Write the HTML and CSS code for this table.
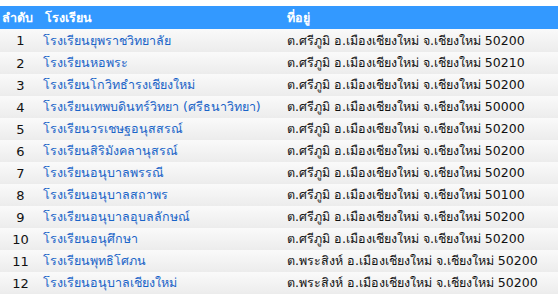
FILE: index.html
```html
<!DOCTYPE html>
<html lang="th">
<head>
<meta charset="utf-8">
<link rel="stylesheet" href="styles.css">
</head>
<body>
<table class="schools">
  <thead>
    <tr><th class="c-no">ลำดับ</th><th class="c-name">โรงเรียน</th><th class="c-addr">ที่อยู่</th></tr>
  </thead>
  <tbody>
    <tr><td class="c-no">1</td><td class="c-name"><a href="#">โรงเรียนยุพราชวิทยาลัย</a></td><td class="c-addr">ต.ศรีภูมิ อ.เมืองเชียงใหม่ จ.เชียงใหม่ 50200</td></tr>
    <tr><td class="c-no">2</td><td class="c-name"><a href="#">โรงเรียนหอพระ</a></td><td class="c-addr">ต.ศรีภูมิ อ.เมืองเชียงใหม่ จ.เชียงใหม่ 50210</td></tr>
    <tr><td class="c-no">3</td><td class="c-name"><a href="#">โรงเรียนโกวิทธำรงเชียงใหม่</a></td><td class="c-addr">ต.ศรีภูมิ อ.เมืองเชียงใหม่ จ.เชียงใหม่ 50200</td></tr>
    <tr><td class="c-no">4</td><td class="c-name"><a href="#">โรงเรียนเทพบดินทร์วิทยา (ศรีธนาวิทยา)</a></td><td class="c-addr">ต.ศรีภูมิ อ.เมืองเชียงใหม่ จ.เชียงใหม่ 50000</td></tr>
    <tr><td class="c-no">5</td><td class="c-name"><a href="#">โรงเรียนวรเชษฐอนุสสรณ์</a></td><td class="c-addr">ต.ศรีภูมิ อ.เมืองเชียงใหม่ จ.เชียงใหม่ 50200</td></tr>
    <tr><td class="c-no">6</td><td class="c-name"><a href="#">โรงเรียนสิริมังคลานุสรณ์</a></td><td class="c-addr">ต.ศรีภูมิ อ.เมืองเชียงใหม่ จ.เชียงใหม่ 50200</td></tr>
    <tr><td class="c-no">7</td><td class="c-name"><a href="#">โรงเรียนอนุบาลพรรณี</a></td><td class="c-addr">ต.ศรีภูมิ อ.เมืองเชียงใหม่ จ.เชียงใหม่ 50200</td></tr>
    <tr><td class="c-no">8</td><td class="c-name"><a href="#">โรงเรียนอนุบาลสถาพร</a></td><td class="c-addr">ต.ศรีภูมิ อ.เมืองเชียงใหม่ จ.เชียงใหม่ 50100</td></tr>
    <tr><td class="c-no">9</td><td class="c-name"><a href="#">โรงเรียนอนุบาลอุบลลักษณ์</a></td><td class="c-addr">ต.ศรีภูมิ อ.เมืองเชียงใหม่ จ.เชียงใหม่ 50200</td></tr>
    <tr><td class="c-no">10</td><td class="c-name"><a href="#">โรงเรียนอนุศึกษา</a></td><td class="c-addr">ต.ศรีภูมิ อ.เมืองเชียงใหม่ จ.เชียงใหม่ 50200</td></tr>
    <tr><td class="c-no">11</td><td class="c-name"><a href="#">โรงเรียนพุทธิโศภน</a></td><td class="c-addr">ต.พระสิงห์ อ.เมืองเชียงใหม่ จ.เชียงใหม่ 50200</td></tr>
    <tr><td class="c-no">12</td><td class="c-name"><a href="#">โรงเรียนอนุบาลเชียงใหม่</a></td><td class="c-addr">ต.พระสิงห์ อ.เมืองเชียงใหม่ จ.เชียงใหม่ 50200</td></tr>
  </tbody>
</table>
</body>
</html>
```
FILE: styles.css
```css
html, body {
  margin: 0;
  padding: 0;
  background: #ffffff;
}
body {
  padding-top: 6px;
  font-family: Tahoma, "DejaVu Sans", "Noto Sans", sans-serif;
  font-size: 12.5px;
  color: #111111;
}
.schools {
  width: 558px;
  border-collapse: collapse;
  table-layout: fixed;
}
.schools th {
  background: #3399ff;
  color: #ffffff;
  font-weight: bold;
  text-align: left;
  height: 23px;
  padding: 0 0 0 2px;
}
.schools td {
  height: 22px;
  padding: 0;
  background: linear-gradient(#fafafa, #ececec);
}
.schools tbody tr:first-child td { height: 23px; }
.schools .c-no { width: 41px; }
.schools td.c-no { text-align: center; padding-right: 2px; font-size: 13px; }
.schools .c-name { width: 240px; }
.schools .c-addr { padding-left: 2px; }
.schools a {
  color: #1a64c8;
  text-decoration: none;
}
```
